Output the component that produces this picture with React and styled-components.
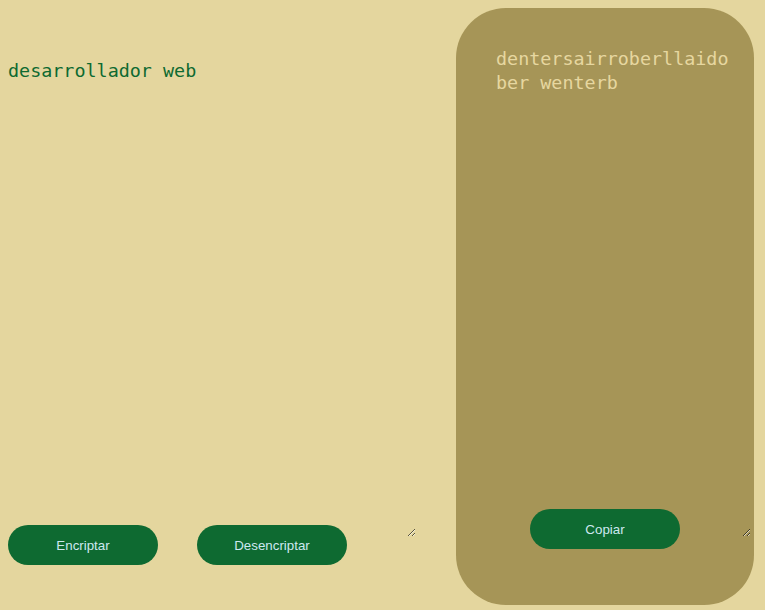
import React from "react";
import styled, { createGlobalStyle } from "styled-components";

const Global = createGlobalStyle`
  html, body { background: #e4d69e; }
  body { margin: 8px; font-family: "Liberation Sans", Arial, sans-serif; }
`;

const Page = styled.main`
  display: flex;
  align-items: flex-start;
  gap: 40px;
`;

const Column = styled.section`
  display: flex;
  flex-direction: column;
  width: 408px;
`;

const TextBox = styled.textarea`
  box-sizing: border-box;
  display: block;
  background: transparent;
  border: none;
  outline: none;
  margin: 0;
  font-family: "DejaVu Sans Mono", "Liberation Mono", monospace;
  font-size: 18.4px;
  line-height: 24px;
  color: ${(p) => p.$color};
  width: ${(p) => p.$w}px;
  height: ${(p) => p.$h}px;
  padding: ${(p) => p.$pad};
  margin-left: ${(p) => p.$ml || 0}px;
  overflow-wrap: break-word;
`;

const ButtonRow = styled.div`
  display: flex;
  gap: 39px;
  margin-top: -12px;
`;

const Button = styled.button`
  width: 150px;
  height: 40px;
  border: none;
  border-radius: 20px;
  background: #0e6a31;
  color: #cde8f0;
  font-family: "Liberation Sans", Arial, sans-serif;
  font-size: 13.333px;
  cursor: pointer;
  padding: 0;
`;

const Panel = styled.aside`
  box-sizing: border-box;
  width: 298px;
  height: 597px;
  border-radius: 50px;
  background: #a69557;
  padding: 39px 0 0 0;
  display: flex;
  flex-direction: column;
`;

const CopyButton = styled(Button)`
  align-self: center;
  margin-top: -28px;
`;

export default function App() {
  return (
    <>
      <Global />
      <Page>
        <Column>
          <TextBox
            $color="#0e6a31"
            $w={408}
            $h={529}
            $pad="51px 0 0 0"
            defaultValue="desarrollador web"
          />
          <ButtonRow>
            <Button>Encriptar</Button>
            <Button>Desencriptar</Button>
          </ButtonRow>
        </Column>
        <Panel>
          <TextBox
            $color="#e6d7a0"
            $w={255}
            $h={490}
            $ml={40}
            $pad="0 14px 0 0"
            defaultValue="dentersairroberllaidober wenterb"
          />
          <CopyButton>Copiar</CopyButton>
        </Panel>
      </Page>
    </>
  );
}
